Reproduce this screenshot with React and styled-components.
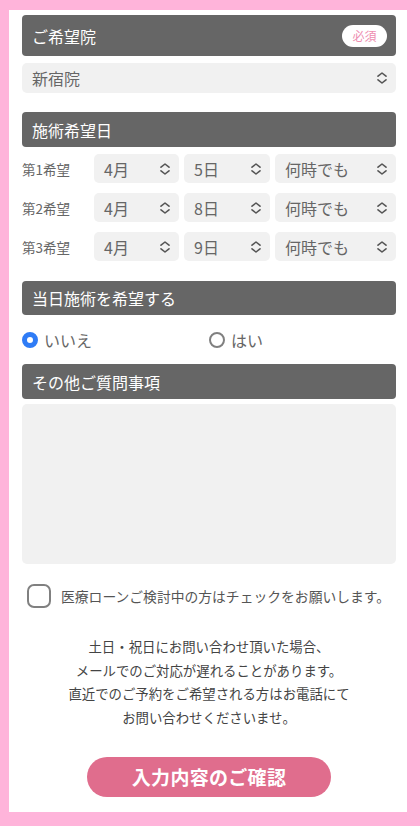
import React from "react";
import styled, { createGlobalStyle } from "styled-components";

const GlobalStyle = createGlobalStyle`
  html, body {
    margin: 0;
    padding: 0;
    background: #ffb4da;
  }
  body {
    font-family: "Noto Sans CJK JP", "Noto Sans", sans-serif;
  }
`;

const Panel = styled.div`
  width: 398px;
  box-sizing: border-box;
  margin: 10px 0 14px 9px;
  padding: 5px 11px 15px 13px;
  background: #fff;
`;

const SectionHead = styled.div`
  height: ${(props) => props.height || 35}px;
  margin-top: ${(props) => props.top || 0}px;
  box-sizing: border-box;
  padding: 0 10px;
  background: #666;
  border-radius: 4px;
  color: #fff;
  font-size: 16px;
  display: flex;
  align-items: center;
  justify-content: space-between;
`;

const Badge = styled.span`
  width: 45px;
  height: 22px;
  border-radius: 11px;
  background: #fff;
  color: #ee8db0;
  font-size: 12px;
  display: flex;
  align-items: center;
  justify-content: center;
  margin-right: -1px;
`;

const SelectBox = styled.div`
  height: ${(props) => props.height || 30}px;
  width: ${(props) => props.width || "auto"};
  flex: ${(props) => props.flex || "none"};
  margin-top: ${(props) => props.top || 0}px;
  box-sizing: border-box;
  padding: 0 8px 0 10px;
  background: #f1f1f1;
  border-radius: 5px;
  color: #666;
  font-size: 16px;
  display: flex;
  align-items: center;
  justify-content: space-between;
`;

const DateRows = styled.div`
  margin-top: 7px;
  display: flex;
  flex-direction: column;
  gap: 10px;
`;

const DateRow = styled.div`
  display: flex;
  align-items: center;
  gap: 5px;
`;

const RowLabel = styled.span`
  width: 67px;
  flex: none;
  font-size: 13.5px;
  color: #666;
`;

const RadioRow = styled.div`
  height: 49px;
  display: flex;
  align-items: center;
`;

const RadioOption = styled.label`
  width: ${(props) => props.width}px;
  display: flex;
  align-items: center;
  gap: 6px;
  font-size: 16px;
  color: #666;
`;

const RadioDot = styled.span`
  width: 16px;
  height: 16px;
  box-sizing: border-box;
  border-radius: 50%;
  flex: none;
  border: ${(props) => (props.checked ? "5px solid #2f7cf6" : "2px solid #808080")};
  background: #fff;
`;

const TextArea = styled.div`
  height: 160px;
  margin-top: 5px;
  background: #f1f1f1;
  border-radius: 5px;
`;

const CheckRow = styled.label`
  margin-top: 20px;
  padding-left: 5px;
  display: flex;
  align-items: center;
  gap: 10px;
  font-size: 13.8px;
  color: #555;
`;

const CheckBox = styled.span`
  width: 24px;
  height: 24px;
  box-sizing: border-box;
  border: 2px solid #808080;
  border-radius: 7px;
  flex: none;
`;

const Notice = styled.p`
  margin: 27px 0 0;
  text-align: center;
  font-size: 13.4px;
  line-height: 23.7px;
  color: #444;
`;

const SubmitButton = styled.button`
  display: block;
  margin: 27px auto 0;
  width: 244px;
  height: 40px;
  border: none;
  border-radius: 20px;
  background: #e06d8d;
  color: #fff;
  font-family: inherit;
  font-size: 19px;
  font-weight: bold;
  letter-spacing: 0.3px;
`;

function UpDown() {
  return (
    <svg width="12" height="12" viewBox="0 0 12 12" fill="none" stroke="#555" strokeWidth="1.6" strokeLinecap="round" strokeLinejoin="round">
      <path d="M2 4.2 6 1 10 4.2" />
      <path d="M2 7.8 6 11 10 7.8" />
    </svg>
  );
}

const wishes = [
  { label: "第1希望", month: "4月", day: "5日" },
  { label: "第2希望", month: "4月", day: "8日" },
  { label: "第3希望", month: "4月", day: "9日" },
];

export default function App() {
  return (
    <>
      <GlobalStyle />
      <Panel>
        <SectionHead height={41}>
          ご希望院
          <Badge>必須</Badge>
        </SectionHead>
        <SelectBox top={7}>
          新宿院
          <UpDown />
        </SelectBox>

        <SectionHead top={19}>施術希望日</SectionHead>
        <DateRows>
          {wishes.map((w) => (
            <DateRow key={w.label}>
              <RowLabel>{w.label}</RowLabel>
              <SelectBox width="85px" height={29}>
                {w.month}
                <UpDown />
              </SelectBox>
              <SelectBox width="86px" height={29}>
                {w.day}
                <UpDown />
              </SelectBox>
              <SelectBox flex="1" height={29}>
                何時でも
                <UpDown />
              </SelectBox>
            </DateRow>
          ))}
        </DateRows>

        <SectionHead top={20} height={34}>当日施術を希望する</SectionHead>
        <RadioRow>
          <RadioOption width={187}>
            <RadioDot checked />
            いいえ
          </RadioOption>
          <RadioOption>
            <RadioDot />
            はい
          </RadioOption>
        </RadioRow>

        <SectionHead>その他ご質問事項</SectionHead>
        <TextArea />

        <CheckRow>
          <CheckBox />
          医療ローンご検討中の方はチェックをお願いします。
        </CheckRow>

        <Notice>
          土日・祝日にお問い合わせ頂いた場合、
          <br />
          メールでのご対応が遅れることがあります。
          <br />
          直近でのご予約をご希望される方はお電話にて
          <br />
          お問い合わせくださいませ。
        </Notice>

        <SubmitButton>入力内容のご確認</SubmitButton>
      </Panel>
    </>
  );
}
